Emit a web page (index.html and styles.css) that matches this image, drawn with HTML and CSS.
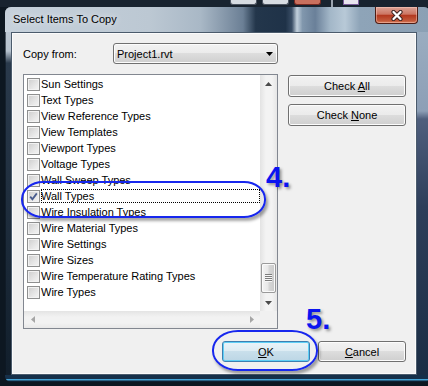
FILE: index.html
```html
<!DOCTYPE html>
<html lang="en">
<head>
  <meta charset="utf-8">
  <meta name="viewport" content="width=device-width, initial-scale=1">
  <title>Select Items To Copy</title>

  <link rel="stylesheet" href="styles.css">
</head>
<body>

  <!-- strip of the window that sits behind the dialog -->
  <div class="behind">
    <span class="ghostBtn"></span>
    <span class="ghostBtn"></span>
    <span class="ghostBtn ghostClose"></span>
    <span class="ghostLine"></span>
    <span class="ghostBox"></span>
  </div>

  <div class="window">
    <div class="titleBar">
      <span class="titleText">Select Items To Copy</span>
      <div class="closeBtn">
        <svg width="14" height="11" viewBox="0 0 14 11">
          <path d="M3.5 2 L10.5 9 M10.5 2 L3.5 9" stroke="#3a2220" stroke-width="4.2" stroke-linecap="round" fill="none"/>
          <path d="M3.5 2 L10.5 9 M10.5 2 L3.5 9" stroke="#ffffff" stroke-width="2.3" stroke-linecap="round" fill="none"/>
        </svg>
      </div>
    </div>

    <div class="client">
      <div class="fromRow">
        <span class="fromLabel">Copy from:</span>
        <div class="combo">
          <span>Project1.rvt</span>
          <svg width="7" height="4" viewBox="0 0 7 4"><polygon points="0,0 7,0 3.5,4" fill="#000"/></svg>
        </div>
      </div>

      <div class="mainRow">
        <div class="listBox">
          <div class="listTop">
            <div class="listItems">
              <div class="item"><span class="check"></span><span class="itemText">Sun Settings</span></div>
              <div class="item"><span class="check"></span><span class="itemText">Text Types</span></div>
              <div class="item"><span class="check"></span><span class="itemText">View Reference Types</span></div>
              <div class="item"><span class="check"></span><span class="itemText">View Templates</span></div>
              <div class="item"><span class="check"></span><span class="itemText">Viewport Types</span></div>
              <div class="item"><span class="check"></span><span class="itemText">Voltage Types</span></div>
              <div class="item"><span class="check"></span><span class="itemText">Wall Sweep Types</span></div>
              <div class="item">
                <span class="check">
                  <svg width="11" height="11" viewBox="0 0 11 11"><path d="M2.2 5.6 L4.4 8.2 L8.8 2.4" stroke="#4a5d8e" stroke-width="1.8" fill="none"/></svg>
                </span>
                <span class="itemText focused">Wall Types</span>
              </div>
              <div class="item"><span class="check"></span><span class="itemText">Wire Insulation Types</span></div>
              <div class="item"><span class="check"></span><span class="itemText">Wire Material Types</span></div>
              <div class="item"><span class="check"></span><span class="itemText">Wire Settings</span></div>
              <div class="item"><span class="check"></span><span class="itemText">Wire Sizes</span></div>
              <div class="item"><span class="check"></span><span class="itemText">Wire Temperature Rating Types</span></div>
              <div class="item"><span class="check"></span><span class="itemText">Wire Types</span></div>
            </div>

            <div class="vScroll">
              <div class="arrowBtn">
                <svg width="7" height="4" viewBox="0 0 7 4"><polygon points="0,4 3.5,0 7,4" fill="#4a4a4a"/></svg>
              </div>
              <div class="vTrack">
                <div class="vThumb"><span class="grip"></span></div>
              </div>
              <div class="arrowBtn">
                <svg width="7" height="4" viewBox="0 0 7 4"><polygon points="0,0 7,0 3.5,4" fill="#4a4a4a"/></svg>
              </div>
            </div>
          </div>

          <div class="hScroll">
            <div class="arrowBtn">
              <svg width="4" height="7" viewBox="0 0 4 7"><polygon points="4,0 4,7 0,3.5" fill="#a6a6a6"/></svg>
            </div>
            <div class="hTrack"></div>
            <div class="arrowBtn">
              <svg width="4" height="7" viewBox="0 0 4 7"><polygon points="0,0 0,7 4,3.5" fill="#a6a6a6"/></svg>
            </div>
            <div class="scrollCorner"></div>
          </div>
        </div>

        <div class="sideButtons">
          <button class="winBtn">Check <u>A</u>ll</button>
          <button class="winBtn">Check <u>N</u>one</button>
        </div>
      </div>

      <div class="footer">
        <button class="winBtn defaultBtn"><u>O</u>K</button>
        <button class="winBtn"><u>C</u>ancel</button>
      </div>
    </div>

    <div class="frameBottom"></div>
  </div>

  <!-- tutorial markup drawn over the screenshot -->
  <div class="ring ringWall"></div>
  <div class="stepNum stepFour">4.</div>
  <div class="ring ringOk"></div>
  <div class="stepNum stepFive">5.</div>

</body>
</html>
```

FILE: styles.css
```css
html, body {
  margin: 0;
  width: 428px;
  height: 386px;
  overflow: hidden;
}

body {
  position: relative;
  background: #0d1721;
  font-family: "Liberation Sans", Arial, sans-serif;
  font-size: 11px;
  color: #000;
}

/* ---- window behind ---- */

.behind {
  display: flex;
  height: 7px;
  padding-left: 230px;
  background: #18232f;
}

.ghostBtn {
  width: 25px;
  height: 4px;
  margin-right: 5px;
  border: 1px solid #4d5562;
  border-top: none;
  border-radius: 0 0 3px 3px;
  background: #d7dce2;
}

.ghostClose {
  background: #c9705e;
  border-color: #7a2a22;
}

.ghostLine {
  width: 2px;
  height: 7px;
  margin-left: 5px;
  background: #9aa4b0;
}

.ghostBox {
  width: 14px;
  height: 4px;
  margin-left: 10px;
  border: 1px solid #7b5d9a;
  border-top: none;
  background: #e8e4ee;
}

/* ---- dialog frame ---- */

.window {
  display: flex;
  flex-direction: column;
  width: 425px;
  height: 375px;
  margin-left: 5px;
  border-radius: 6px;
  overflow: hidden;
  background:
    linear-gradient(to bottom, #c3ced9 0, #b6c2ce 44px, #2a3a4c 56px, #111e2b 100%) left top / 6px 100% no-repeat,
    linear-gradient(to bottom, #9fb1c3 0, #8d9fb6 104px, #4f5f7d 112px, #2e3e5a 200px, #1a2d44 100%);
  box-shadow: inset 0 0 0 1px rgba(10, 20, 30, 0.6);
}

.titleBar {
  display: flex;
  justify-content: space-between;
  align-items: flex-start;
  height: 25px;
  padding: 0 12px 0 8px;
  background: linear-gradient(to right,
    #c6d1db 0%, #bcc8d3 34%, #a9b8c6 46%, #6b7f95 56%,
    #23364b 59%, #1f3248 66%, #3a4e66 67.5%, #c2d0dc 68.7%,
    #8197ad 70%, #6a8099 73%, #a3b7c8 76.5%, #b8c9d7 80%,
    #8ea4b8 83.5%, #8ba0b4 100%);
}

.titleText {
  padding-top: 5px;
  line-height: 14px;
  text-shadow: 0 0 6px rgba(255, 255, 255, 0.9);
}

.closeBtn {
  display: flex;
  justify-content: center;
  align-items: center;
  width: 41px;
  height: 16px;
  border: 1px solid #4e1c14;
  border-top: none;
  border-radius: 0 0 4px 4px;
  background: linear-gradient(to bottom, #dca396 0%, #cc7562 45%, #b3381f 52%, #c2583a 85%, #d77e5a 100%);
  box-shadow: inset 0 0 0 1px rgba(255, 210, 200, 0.45);
}

.client {
  display: flex;
  flex-direction: column;
  box-sizing: border-box;
  width: 406px;
  height: 343px;
  margin-left: 6px;
  padding: 10px 10px 12px 11px;
  border: 1px solid #4b5b6c;
  background: #f0f0f0;
  box-shadow: inset 0 0 0 1px #fbfbfb;
}

.frameBottom {
  flex: 1;
  background: linear-gradient(to bottom, #16304a 0, #16304a 4px, #46a4d6 4px, #46a4d6 5px, #0f2032 6px);
}

/* ---- top row ---- */

.fromRow {
  display: flex;
  align-items: center;
  height: 21px;
}

.fromLabel {
  width: 90px;
}

.combo {
  display: flex;
  justify-content: space-between;
  align-items: center;
  box-sizing: border-box;
  width: 165px;
  height: 21px;
  padding: 0 4px 0 3px;
  border: 1px solid #707070;
  border-radius: 3px;
  background: linear-gradient(to bottom, #f2f2f2 0%, #ebebeb 50%, #dddddd 50%, #cfcfcf 100%);
  box-shadow: inset 0 0 0 1px #fcfcfc;
}

/* ---- list + side buttons ---- */

.mainRow {
  display: flex;
  gap: 10px;
  margin-top: 10px;
}

.listBox {
  display: flex;
  flex-direction: column;
  box-sizing: border-box;
  width: 255px;
  height: 255px;
  border: 1px solid #828790;
  background: #fff;
}

.listTop {
  display: flex;
  flex: 1;
}

.listItems {
  flex: 1;
  padding-top: 1px;
}

.item {
  display: flex;
  align-items: center;
  height: 16px;
  padding-left: 3px;
}

.check {
  display: flex;
  justify-content: center;
  align-items: center;
  box-sizing: border-box;
  width: 13px;
  height: 13px;
  border: 1px solid #8e8f8f;
  background: linear-gradient(135deg, #cccccc 0%, #e3e3e3 50%, #f5f5f5 100%);
  box-shadow: inset 0 0 0 1px #f2f2f2;
}

.itemText {
  flex: 1;
  box-sizing: border-box;
  height: 14px;
  margin-left: 1px;
  line-height: 14px;
  white-space: nowrap;
}

.itemText.focused {
  outline: 1px dotted #000;
  outline-offset: -1px;
}

.vScroll {
  display: flex;
  flex-direction: column;
  width: 17px;
  background: linear-gradient(to right, #e3e3e3 0%, #f3f3f3 35%, #f3f3f3 70%, #e6e6e6 100%);
}

.arrowBtn {
  display: flex;
  justify-content: center;
  align-items: center;
  width: 17px;
  height: 17px;
}

.vTrack {
  display: flex;
  flex: 1;
  flex-direction: column;
  justify-content: flex-end;
  align-items: center;
  padding-bottom: 1px;
}

.vThumb {
  display: flex;
  justify-content: center;
  align-items: center;
  box-sizing: border-box;
  width: 15px;
  height: 30px;
  border: 1px solid #9a9a9a;
  border-radius: 2px;
  background: linear-gradient(to right, #f4f4f4 0%, #e8e8e8 45%, #d6d6d6 55%, #cacaca 100%);
  box-shadow: inset 0 0 0 1px #fafafa;
}

.grip {
  width: 7px;
  height: 8px;
  background: repeating-linear-gradient(to bottom, #7c7c7c 0, #7c7c7c 1px, #f6f6f6 1px, #f6f6f6 2px);
}

.hScroll {
  display: flex;
  height: 17px;
  background: linear-gradient(to bottom, #e4e4e4 0%, #f2f2f2 35%, #f2f2f2 70%, #e8e8e8 100%);
}

.hTrack {
  flex: 1;
}

.scrollCorner {
  width: 17px;
  background: #f0f0f0;
}

.sideButtons {
  display: flex;
  flex-direction: column;
  gap: 7px;
  width: 118px;
  margin-top: 1px;
}

.sideButtons .winBtn {
  height: 22px;
}

/* ---- buttons ---- */

.winBtn {
  box-sizing: border-box;
  padding: 0;
  border: 1px solid #707070;
  border-radius: 3px;
  background: linear-gradient(to bottom, #f2f2f2 0%, #ebebeb 50%, #dddddd 50%, #cfcfcf 100%);
  box-shadow: inset 0 0 0 1px #fcfcfc;
  font: inherit;
  color: #000;
}

.footer {
  display: flex;
  justify-content: flex-end;
  gap: 8px;
  margin-top: 12px;
}

.footer .winBtn {
  width: 88px;
  height: 21px;
}

.defaultBtn {
  border-color: #3c7fb1;
  background: linear-gradient(to bottom, #eaf4f9 0%, #dcebf3 50%, #c9dfeb 50%, #bcd6e5 100%);
  box-shadow: inset 0 0 0 1px #5fcff6;
}

/* ---- annotations ---- */

.ring {
  position: absolute;
  box-sizing: border-box;
  border: 2.5px solid #1727ee;
  box-shadow: 2px 3px 3px rgba(0, 0, 0, 0.35);
}

.ringWall {
  left: 21px;
  top: 181px;
  width: 245px;
  height: 37px;
  border-radius: 22px / 18px;
}

.ringOk {
  left: 212px;
  top: 330px;
  width: 106px;
  height: 41px;
  border-radius: 26px / 20px;
}

.stepNum {
  position: absolute;
  font-family: "Liberation Sans", Arial, sans-serif;
  font-weight: bold;
  font-size: 29px;
  line-height: 28px;
  color: #0a14f0;
  text-shadow: 2px 2px 3px rgba(0, 0, 0, 0.4);
}

.stepFour {
  left: 266px;
  top: 163px;
}

.stepFive {
  left: 306px;
  top: 305px;
}
```
